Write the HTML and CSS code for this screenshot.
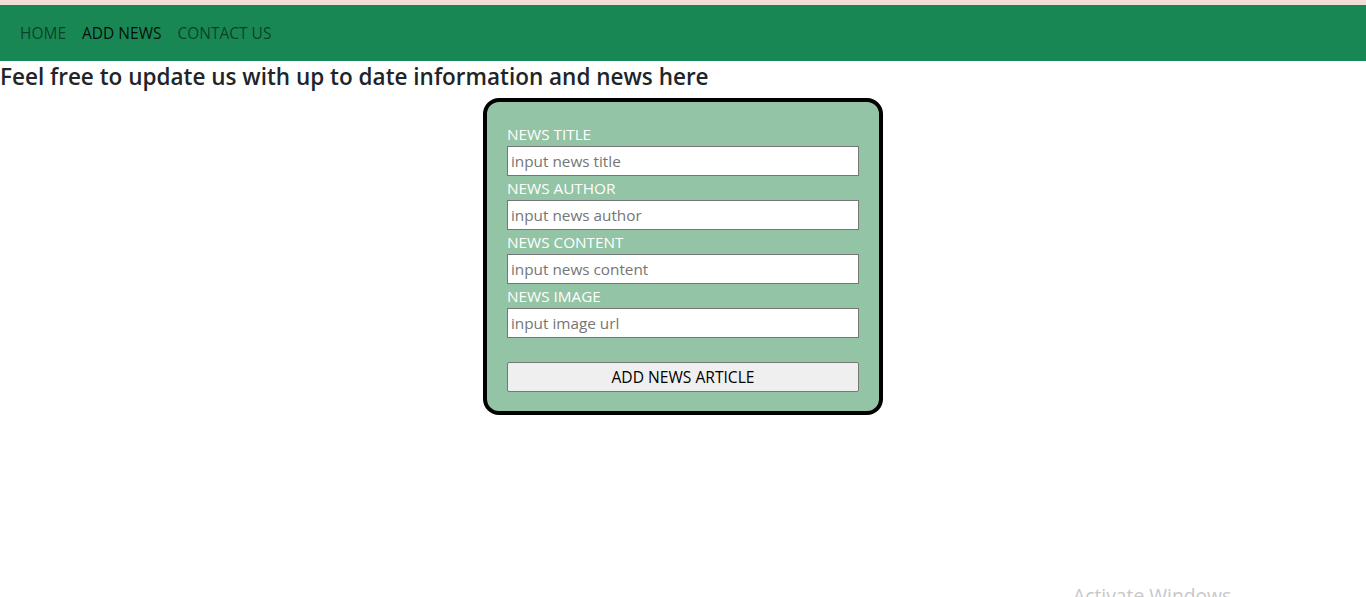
FILE: index.html
```html
<!DOCTYPE html>
<html lang="en">
<head>
<meta charset="utf-8">
<title>Add News</title>
<link rel="stylesheet" href="styles.css">
</head>
<body>
<div class="topstrip"></div>
<nav class="navbar">
  <a class="nav-link" href="#">HOME</a>
  <a class="nav-link active" href="#">ADD NEWS</a>
  <a class="nav-link" href="#">CONTACT US</a>
</nav>
<h4 class="heading">Feel free to update us with up to date information and news here</h4>
<form class="card">
  <label class="lbl">NEWS TITLE</label>
  <input class="inp" type="text" placeholder="input news title">
  <label class="lbl">NEWS AUTHOR</label>
  <input class="inp" type="text" placeholder="input news author">
  <label class="lbl">NEWS CONTENT</label>
  <input class="inp" type="text" placeholder="input news content">
  <label class="lbl">NEWS IMAGE</label>
  <input class="inp" type="text" placeholder="input image url">
  <button class="btn" type="button">ADD NEWS ARTICLE</button>
</form>
<div class="watermark">Activate Windows</div>
</body>
</html>
```
FILE: styles.css
```css
html, body {
  margin: 0;
  padding: 0;
  background: #fff;
  font-family: "Open Sans", "Noto Sans", sans-serif;
  color: #212529;
  overflow: hidden;
  height: 597px;
}
.topstrip {
  height: 5px;
  background: #f1ded7;
}
.navbar {
  height: 56px;
  box-sizing: border-box;
  background: #198754;
  display: flex;
  align-items: center;
  padding: 8px 12px;
}
.nav-link {
  padding: 8px 8px;
  font-size: 15.5px;
  line-height: 24px;
  color: rgba(0, 0, 0, 0.55);
  text-decoration: none;
}
.nav-link.active {
  color: rgba(0, 0, 0, 0.9);
}
.heading {
  margin: 0;
  padding-top: 1px;
  font-size: 22.5px;
  font-weight: 600;
  line-height: 30px;
  color: #212529;
}
.card {
  width: 400px;
  box-sizing: border-box;
  margin: 6px auto 0;
  border: 4px solid #000;
  border-radius: 16px;
  background: #93c4a5;
  padding: 20px 20px 19px;
  display: flex;
  flex-direction: column;
}
.lbl {
  color: #fff;
  font-size: 15.3px;
  line-height: 24px;
  height: 24px;
}
.inp {
  height: 30px;
  box-sizing: border-box;
  margin: 0;
  border: 1px solid #767676;
  border-radius: 0;
  padding: 1px 3px;
  font-family: inherit;
  font-size: 15.3px;
  background: #fff;
}
.inp::placeholder {
  color: #757575;
}
.btn {
  margin-top: 24px;
  height: 30px;
  box-sizing: border-box;
  border: 1px solid #767676;
  border-radius: 2px;
  background: #efefef;
  font-family: inherit;
  font-size: 15.6px;
  color: #000;
}
.watermark {
  position: absolute;
  left: 1073px;
  top: 582px;
  font-size: 19.3px;
  color: #c8c8c8;
  font-family: "Open Sans", sans-serif;
}
```
